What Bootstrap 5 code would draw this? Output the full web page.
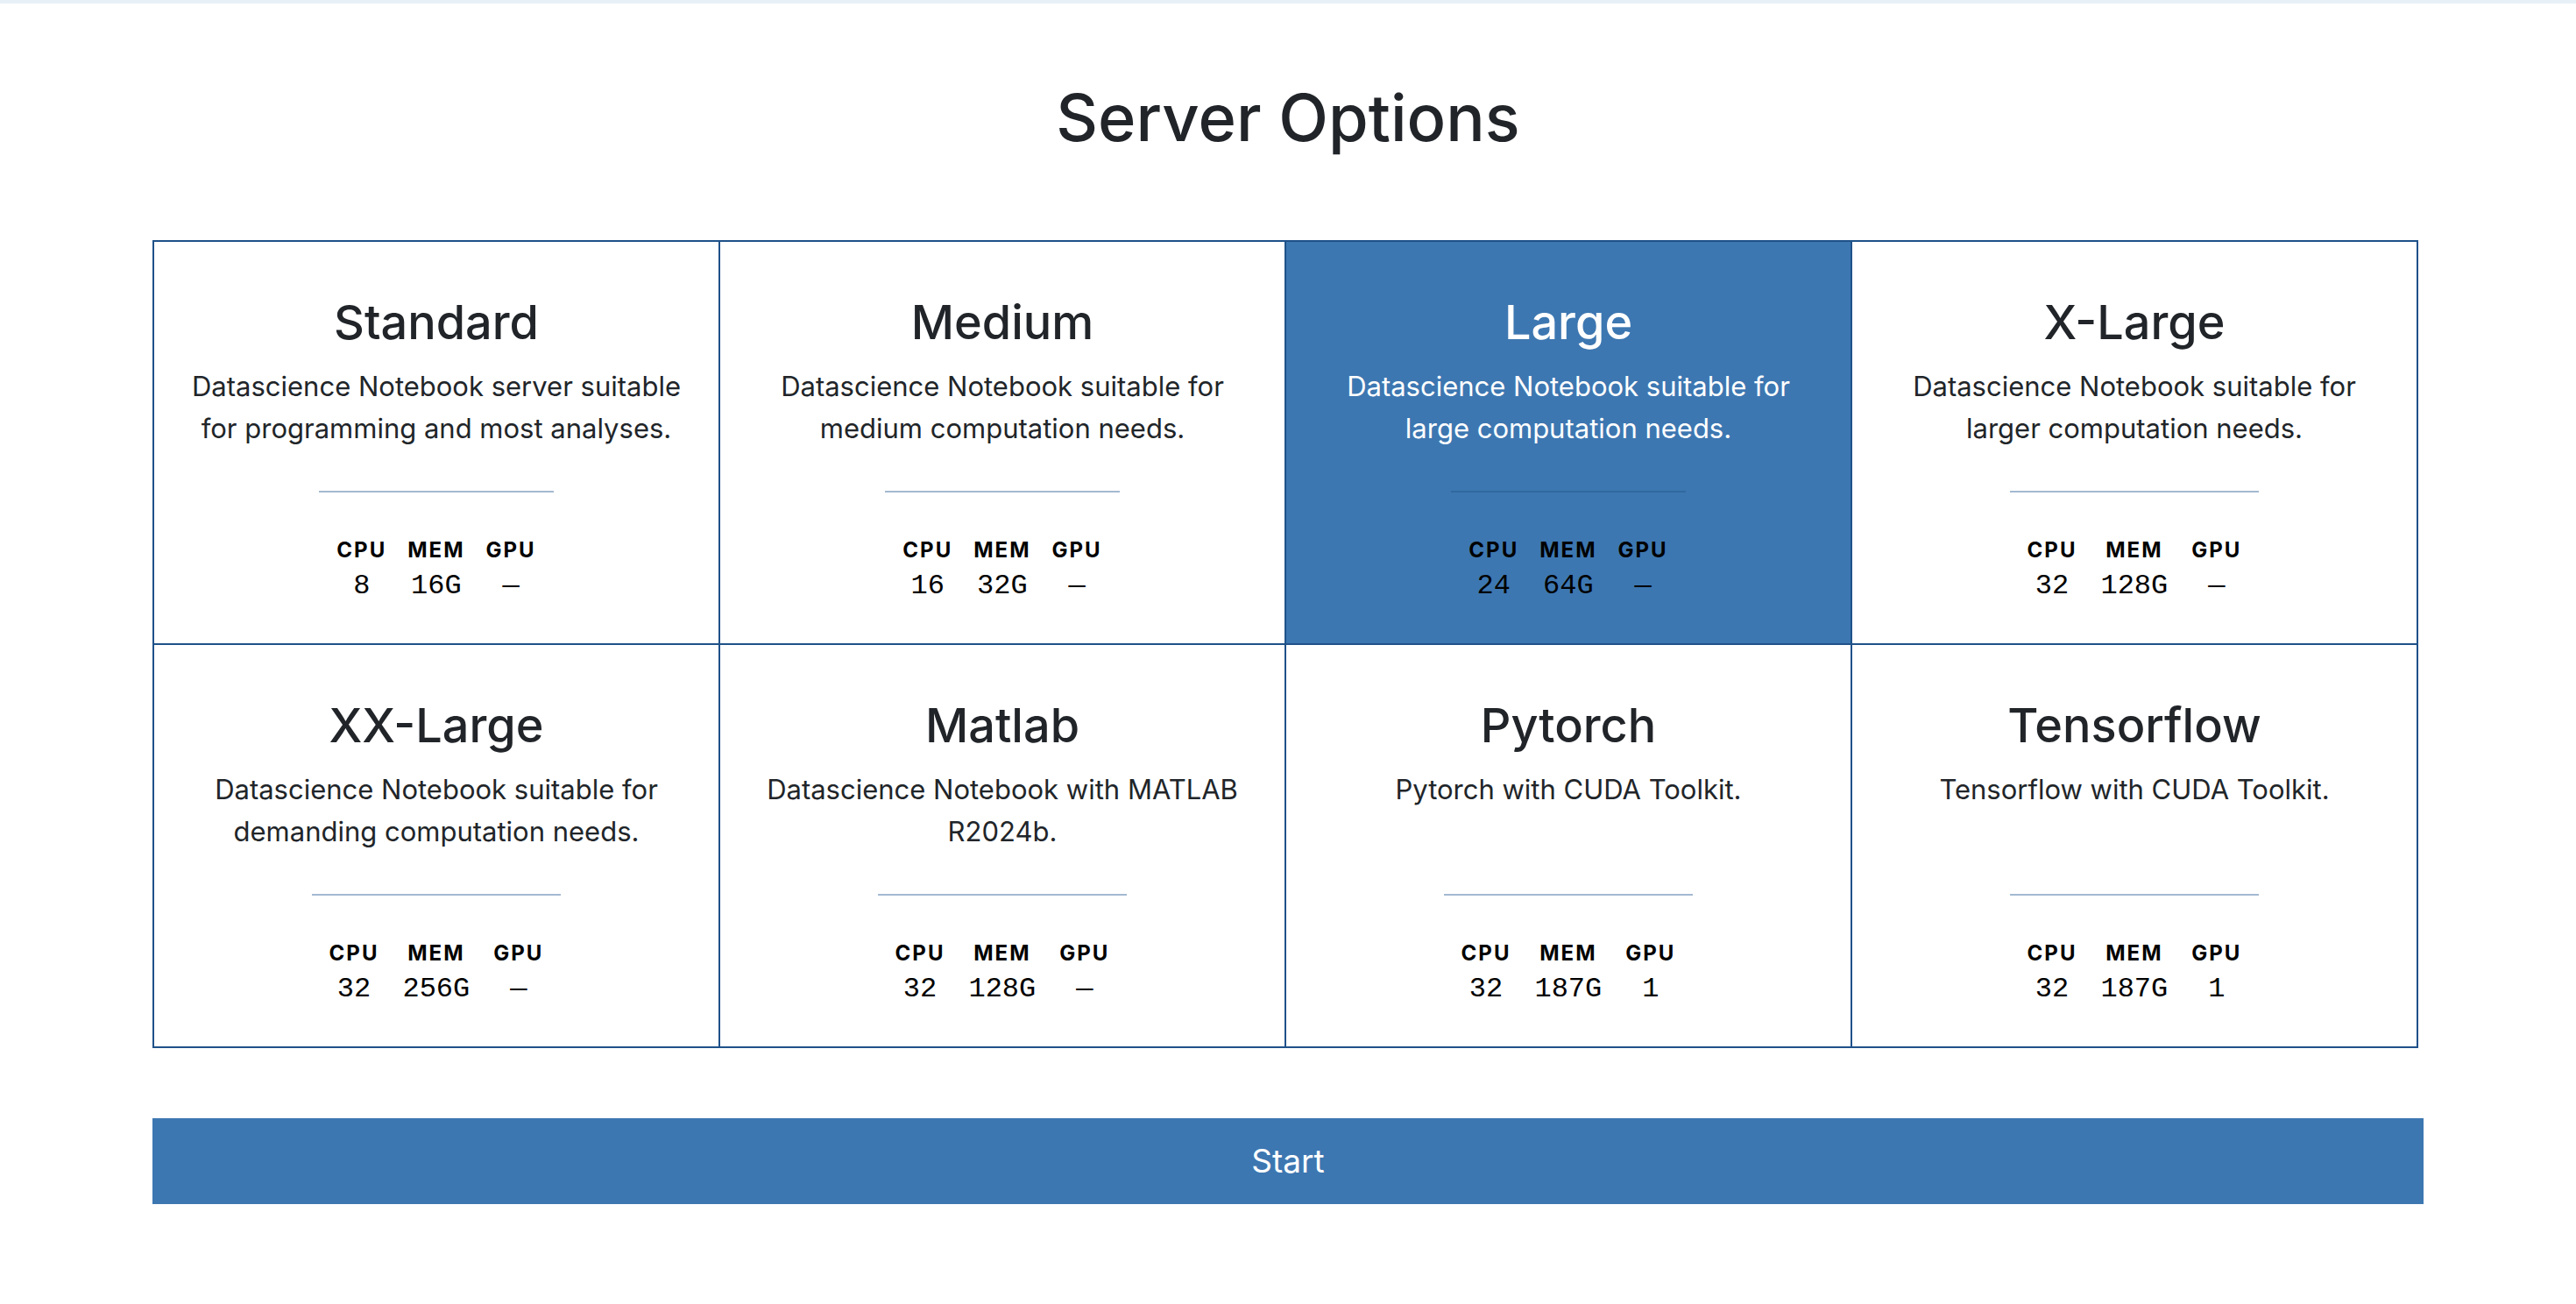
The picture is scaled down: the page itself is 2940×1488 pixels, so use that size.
<!DOCTYPE html>
<html lang="en">
<head>
<meta charset="utf-8">
<meta name="viewport" content="width=device-width, initial-scale=1">
<title>Server Options</title>
<link rel="stylesheet" href="https://cdn.jsdelivr.net/npm/bootstrap@5.3.0/dist/css/bootstrap.min.css">
<style>
  body { font-family: Inter, "Liberation Sans", sans-serif; font-size: 32px; color: #212529; background: #fff; border-top: 4px solid #e8f0f7; }
  .page-wrap { padding: 82px 174px 100px; }
  .page-title { font-size: 74px; line-height: 96px; font-weight: 500; margin-bottom: 92px; }
  .option-grid { border-top: 2px solid #1f5189; border-left: 2px solid #1f5189; margin-right: 6px; margin-bottom: 80px; }
  .option-cell { border-right: 2px solid #1f5189; border-bottom: 2px solid #1f5189; }
  .option-card { padding: 58px 40px 42px; cursor: pointer; }
  .option-name { font-size: 54px; line-height: 68px; font-weight: 500; margin-bottom: 15px; }
  .option-text { font-size: 31px; line-height: 48px; min-height: 96px; }
  .option-specs { margin-top: 47px; border-top: 2px solid #a4b9d1; padding: 46px 6px 0; color: #000; }
  .option-specs table { border-collapse: separate; border-spacing: 4px 2px; }
  .option-specs th { font-size: 24px; line-height: 36px; font-weight: 700; letter-spacing: 2px; padding: 0 10px; }
  .option-specs td { font-family: "Liberation Mono", monospace; line-height: 42px; padding: 0 13px; }
  .btn-check:checked + .option-card { background: #3d77b1; color: #fff; }
  .btn-check:checked + .option-card .option-specs { border-color: #30699f; }
  .start-btn { background: #3d77b1; color: #fff; font-size: 37px; line-height: 60px; padding: 18px; border: 1px solid #3d77b1; }
  .start-btn:hover { background: #1f5189; color: #fff; }
</style>
</head>
<body>
<main class="page-wrap">
  <h1 class="page-title text-center">Server Options</h1>
  <form>
    <div class="option-grid row row-cols-4 g-0" id="options"></div>
    <button type="submit" class="btn start-btn d-block w-100 rounded-0">Start</button>
  </form>
</main>
<script>
  const options = [
    ["Standard", "Datascience Notebook server suitable for programming and most analyses.", "8", "16G", "—"],
    ["Medium", "Datascience Notebook suitable for medium computation needs.", "16", "32G", "—"],
    ["Large", "Datascience Notebook suitable for large computation needs.", "24", "64G", "—"],
    ["X-Large", "Datascience Notebook suitable for larger computation needs.", "32", "128G", "—"],
    ["XX-Large", "Datascience Notebook suitable for demanding computation needs.", "32", "256G", "—"],
    ["Matlab", "Datascience Notebook with MATLAB R2024b.", "32", "128G", "—"],
    ["Pytorch", "Pytorch with CUDA Toolkit.", "32", "187G", "1"],
    ["Tensorflow", "Tensorflow with CUDA Toolkit.", "32", "187G", "1"]
  ];
  document.getElementById("options").innerHTML = options.map(([name, text, cpu, mem, gpu], i) => `
    <div class="col option-cell">
      <input class="btn-check" type="radio" name="profile" id="profile-${i}" value="${i}"${i === 2 ? " checked" : ""}>
      <label class="option-card d-flex flex-column align-items-center text-center h-100" for="profile-${i}">
        <h3 class="option-name">${name}</h3>
        <span class="option-text">${text}</span>
        <span class="option-specs d-block">
          <table>
            <thead><tr><th>CPU</th><th>MEM</th><th>GPU</th></tr></thead>
            <tbody><tr><td>${cpu}</td><td>${mem}</td><td>${gpu}</td></tr></tbody>
          </table>
        </span>
      </label>
    </div>`).join("");
</script>
<script src="https://cdn.jsdelivr.net/npm/bootstrap@5.3.0/dist/js/bootstrap.bundle.min.js"></script>
</body>
</html>
